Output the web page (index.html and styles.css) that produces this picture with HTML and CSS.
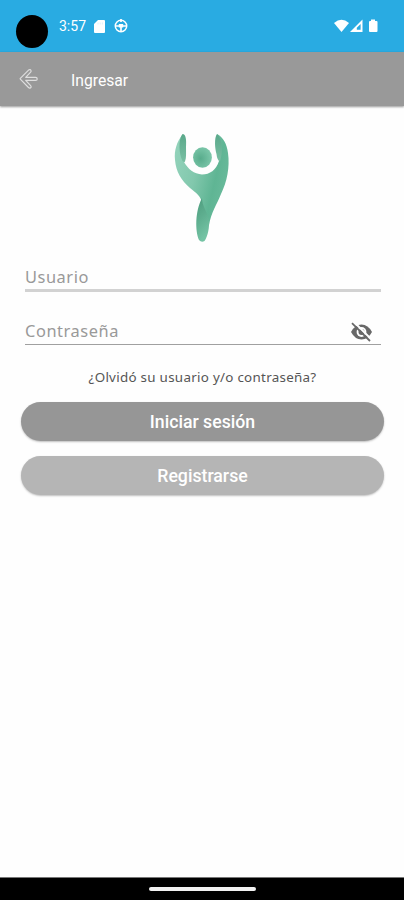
FILE: index.html
```html
<!DOCTYPE html>
<html lang="es">
<head>
    <meta charset="UTF-8">
    <meta name="viewport" content="width=device-width, initial-scale=1.0">
    <title>Ingresar</title>
    <link rel="stylesheet" href="styles.css">
</head>
<body>
    <div class="status-bar">
        <span class="camera"></span>
        <span class="time">3:57</span>
        <svg class="sd-icon" width="11" height="13" viewBox="0 0 11 13">
            <path d="M4 0H10Q11 0 11 1V12Q11 13 10 13H1Q0 13 0 12V4Z" fill="#fff"/>
            <path d="M4 2.5V4.5M6.2 2.5V4.5M8.4 2.5V4.5" stroke="#d6effb" stroke-width="0.8"/>
        </svg>
        <svg class="wheel-icon" width="14" height="14" viewBox="0 0 14 14" fill="none" stroke="#fff">
            <circle cx="7" cy="7" r="5.7" stroke-width="1.5"/>
            <path d="M1.5 7H12.5M7 7.5V12.5M7 0V3" stroke-width="1.7"/>
            <path d="M4.8 5H9.2V8.5H4.8Z" fill="#fff" stroke="none"/>
        </svg>
        <svg class="signal-icons" width="45" height="14" viewBox="0 0 45 14">
            <path d="M0 4Q7.5-2.5 15 4L7.5 13Z" fill="#fff"/>
            <path d="M16 13L28.5 0.5V13Z" fill="#fff"/>
            <path d="M22.8 10.8V8.8L26.6 5V10.8Z" fill="#29abe2"/>
            <path d="M37 0.5H41V2H42.5Q43.5 2 43.5 3V12Q43.5 13 42.5 13H36Q35 13 35 12V3Q35 2 36 2H37Z" fill="#fff"/>
        </svg>
    </div>

    <div class="toolbar">
        <svg class="back-icon" width="20" height="22" viewBox="0 0 20 22">
            <path d="M10.2 1.8Q11.8 1.2 12.1 3Q12.1 3.8 11.4 4.4L6.7 9.3H16.6Q18.2 9.4 18.2 10.9Q18.2 12.3 16.6 12.4H6.7L11.4 17.3Q12.9 19 11.4 20Q10.4 20.4 9.5 19.5L1.3 11.2Q1 10.8 1.3 10.4L9.3 2.3Z" fill="none" stroke="#dedede" stroke-width="1.2" stroke-linejoin="round"/>
        </svg>
        <span class="title">Ingresar</span>
    </div>

    <div class="container">
        <svg class="logo" width="56" height="110" viewBox="0 0 56 110">
            <defs>
                <linearGradient id="bodyColor" x1="0" y1="0.2" x2="1" y2="0.6">
                    <stop offset="0" stop-color="#92d2ba"/>
                    <stop offset="0.4" stop-color="#82c8ad"/>
                    <stop offset="0.75" stop-color="#5fb594"/>
                    <stop offset="1" stop-color="#6abb9c"/>
                </linearGradient>
                <linearGradient id="armColor" x1="0" y1="0" x2="0" y2="1">
                    <stop offset="0" stop-color="#5aa88a"/>
                    <stop offset="1" stop-color="#79bfa3"/>
                </linearGradient>
                <linearGradient id="legColor" x1="0" y1="0" x2="0.3" y2="1">
                    <stop offset="0" stop-color="#4d9c7d"/>
                    <stop offset="0.5" stop-color="#5eae8f"/>
                    <stop offset="1" stop-color="#74c3a4"/>
                </linearGradient>
                <radialGradient id="headColor" cx="0.4" cy="0.55" r="0.6">
                    <stop offset="0" stop-color="#58ac8c"/>
                    <stop offset="1" stop-color="#7cc7aa"/>
                </radialGradient>
            </defs>
            <path d="M8 2C3 9 0 17 1 27C2 39 7 47 16 55C22 60 27 63 28 70C29 80 33 86 35 92C37 80 43 71 47 61C53 49 56 34 54 20C53 11 49 4 43 1C42 12 43 20 45 28C42 37 36 41.5 28 41.5C20 41 14 36 10 29C6 20 7 9 8 2Z" fill="url(#bodyColor)"/>
            <path d="M8.5 1C12 1 12.5 7 12 14C12 20 12.5 25 11 28.5Q10 30 8.5 28C5 21 4 7 8.5 1Z" fill="url(#armColor)"/>
            <path d="M43 1C40 5 41 16 42.5 21Q43 27 46 28.5C49 19 49 7 43 1Z" fill="url(#armColor)"/>
            <ellipse cx="28.5" cy="24.5" rx="9.4" ry="10.3" fill="url(#headColor)"/>
            <path d="M28 65C21 78 21 98 25 107Q27.5 110 30.5 108C34 103 35.5 94 35 87C33 78 28 73 28 65Z" fill="url(#legColor)"/>
        </svg>

        <form class="login-form">
            <div class="field user-field">
                <label>Usuario</label>
            </div>
            <div class="field password-field">
                <label>Contraseña</label>
                <svg class="eye-icon" width="24" height="20" viewBox="0 0 24 20">
                    <path d="M1 10Q5 2.5 11.5 2.5T22 10Q18 17.5 11.5 17.5T1 10Z" fill="#686868"/>
                    <circle cx="11.5" cy="10" r="4.9" fill="#fff"/>
                    <circle cx="11.5" cy="10" r="3" fill="#686868"/>
                    <path d="M4 0L22 18" stroke="#fff" stroke-width="2"/>
                    <path d="M2 1.2L20 19" stroke="#686868" stroke-width="1.8"/>
                </svg>
            </div>
            <div class="forgot">¿Olvidó su usuario y/o contraseña?</div>
            <button type="button" class="btn btn-login">Iniciar sesión</button>
            <button type="button" class="btn btn-register">Registrarse</button>
        </form>
    </div>

    <div class="nav-bar">
        <span class="nav-handle"></span>
    </div>
</body>
</html>
```

FILE: styles.css
```css
* {
    box-sizing: border-box;
}
body {
    margin: 0;
    height: 900px;
    display: flex;
    flex-direction: column;
    background-color: #fefefe;
    font-family: Roboto, sans-serif;
    overflow: hidden;
}
.status-bar {
    display: flex;
    align-items: center;
    height: 52px;
    flex-shrink: 0;
    padding: 0 24px 0 16px;
    background: #29abe2;
    color: #fff;
}
.camera {
    width: 32px;
    height: 33px;
    margin-top: 11px;
    border-radius: 50%;
    background: #000;
}
.time {
    width: 28px;
    margin-left: 11px;
    font-size: 14px;
    line-height: 20px;
    white-space: nowrap;
}
.sd-icon {
    margin-left: 7px;
}
.wheel-icon {
    margin-left: 9px;
}
.signal-icons {
    margin-left: auto;
    margin-right: 1px;
}
.toolbar {
    display: flex;
    align-items: center;
    height: 54px;
    flex-shrink: 0;
    padding-left: 19px;
    background: #999;
    color: #fff;
    box-shadow: 0 1px 2px rgba(0, 0, 0, 0.4);
}
.title {
    margin-left: 32px;
    margin-top: 2px;
    font-size: 15.7px;
}
.container {
    flex: 1;
    padding: 27px 20px 0 21px;
}
.logo {
    display: block;
    margin: 0 auto;
    transform: translateX(-1px);
}
.login-form {
    display: flex;
    flex-direction: column;
}
.field {
    display: flex;
    align-items: center;
    margin: 0 3px 0 4px;
    color: #999;
    font-family: "Noto Sans", sans-serif;
    font-size: 16.4px;
    letter-spacing: 0.55px;
}
.user-field {
    height: 49px;
    padding-top: 20px;
    border-bottom: 3px solid #d2d2d2;
}
.password-field {
    justify-content: space-between;
    height: 53px;
    padding-top: 24px;
    border-bottom: 1px solid #a0a0a0;
}
.eye-icon {
    margin-right: 7px;
    margin-top: 4px;
}
.forgot {
    height: 57px;
    padding-top: 22px;
    text-align: center;
    color: #555;
    font-family: "Noto Sans", sans-serif;
    font-size: 13.4px;
    line-height: 20px;
    letter-spacing: 0.28px;
}
.btn {
    height: 39px;
    padding: 1px 0 0;
    border: none;
    border-radius: 20px;
    color: #fff;
    font-family: Roboto, sans-serif;
    font-size: 17.7px;
    font-weight: 500;
    box-shadow: 0 1px 2px rgba(0, 0, 0, 0.25);
}
.btn-login {
    background: #969696;
}
.btn-register {
    margin-top: 15px;
    background: #b5b5b5;
}
.nav-bar {
    display: flex;
    justify-content: center;
    align-items: center;
    height: 23px;
    flex-shrink: 0;
    border-top: 1px solid #777;
    background: #000;
}
.nav-handle {
    width: 107px;
    height: 4px;
    border-radius: 2px;
    background: #f2f2f2;
}
```
